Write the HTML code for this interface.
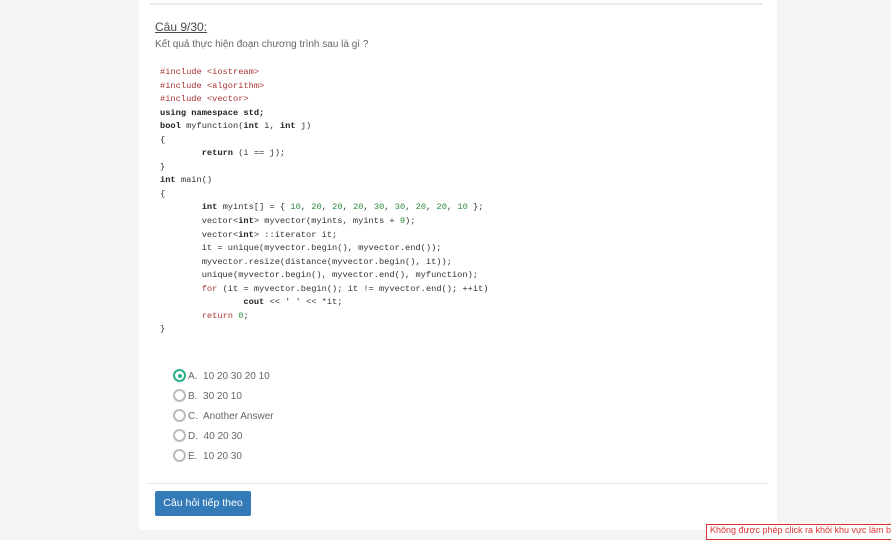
<!DOCTYPE html>
<html><head><meta charset="utf-8"><style>
html,body{margin:0;padding:0;width:891px;height:535px;overflow:hidden;background:#f4f4f4;font-family:"Liberation Sans",sans-serif}
.panel{position:absolute;left:139px;top:0;width:638px;height:530px;background:#fff}
.l1{position:absolute;left:150px;top:3px;width:613px;height:2px;background:#eaeaea}
.l2{position:absolute;left:148px;top:483px;width:620px;height:1px;background:#e5e5e5}
.t{position:absolute;left:155px;top:20px;font-size:12px;color:#4a4a4a;text-decoration:underline}
.q{position:absolute;left:155px;top:39px;font-size:10px;color:#666}
pre{position:absolute;left:160px;top:66px;margin:0;font-family:"Liberation Mono",monospace;font-size:8.7px;line-height:13.55px;color:#333}
.r{color:#a33}.g{color:#2a8a3a}b{font-weight:bold;color:#222}
.opt{position:absolute;left:173px;font-size:10px;color:#666;height:14px;line-height:14px}
.rad{display:inline-block;width:9px;height:9px;border:2px solid #bbb;border-radius:50%;vertical-align:-3px;margin-right:2px;box-sizing:content-box}
.sel{border-color:#2bb08a;position:relative}
.sel:after{content:"";position:absolute;left:2.5px;top:2.5px;width:4px;height:4px;border-radius:50%;background:#2bb08a}
.btn{position:absolute;left:155px;top:491px;width:96px;height:25px;background:#337ab7;color:#fff;font-size:10.5px;line-height:25px;text-align:center;border-radius:2px}
.warn{position:absolute;left:706px;top:524px;width:190px;height:14px;border:1px solid #d33;background:#fff;color:#d33;font-size:9px;line-height:11px;padding-left:3px;white-space:nowrap;overflow:hidden}
</style></head><body>
<div class="panel"></div>
<div class="l1"></div>
<div class="t">Câu 9/30:</div>
<div class="q">Kết quả thực hiện đoạn chương trình sau là gì ?</div>
<pre><span class="r">#include &lt;iostream&gt;</span>
<span class="r">#include &lt;algorithm&gt;</span>
<span class="r">#include &lt;vector&gt;</span>
<b>using namespace std;</b>
<b>bool</b> myfunction(<b>int</b> i, <b>int</b> j)
{
        <b>return</b> (i == j);
}
<b>int</b> main()
{
        <b>int</b> myints[] = { <span class="g">10</span>, <span class="g">20</span>, <span class="g">20</span>, <span class="g">20</span>, <span class="g">30</span>, <span class="g">30</span>, <span class="g">20</span>, <span class="g">20</span>, <span class="g">10</span> };
        vector&lt;<b>int</b>&gt; myvector(myints, myints + <span class="g">9</span>);
        vector&lt;<b>int</b>&gt; ::iterator it;
        it = unique(myvector.begin(), myvector.end());
        myvector.resize(distance(myvector.begin(), it));
        unique(myvector.begin(), myvector.end(), myfunction);
        <span class="r">for</span> (it = myvector.begin(); it != myvector.end(); ++it)
                <b>cout</b> &lt;&lt; ' ' &lt;&lt; *it;
        <span class="r">return</span> <span class="g">0</span>;
}</pre>
<div class="opt" style="top:369px"><span class="rad sel"></span>A.&nbsp; 10 20 30 20 10</div>
<div class="opt" style="top:389px"><span class="rad"></span>B.&nbsp; 30 20 10</div>
<div class="opt" style="top:409px"><span class="rad"></span>C.&nbsp; Another Answer</div>
<div class="opt" style="top:429px"><span class="rad"></span>D.&nbsp; 40 20 30</div>
<div class="opt" style="top:449px"><span class="rad"></span>E.&nbsp; 10 20 30</div>
<div class="l2"></div>
<div class="btn">Câu hỏi tiếp theo</div>
<div class="warn">Không được phép click ra khỏi khu vực làm bài</div>
</body></html>
